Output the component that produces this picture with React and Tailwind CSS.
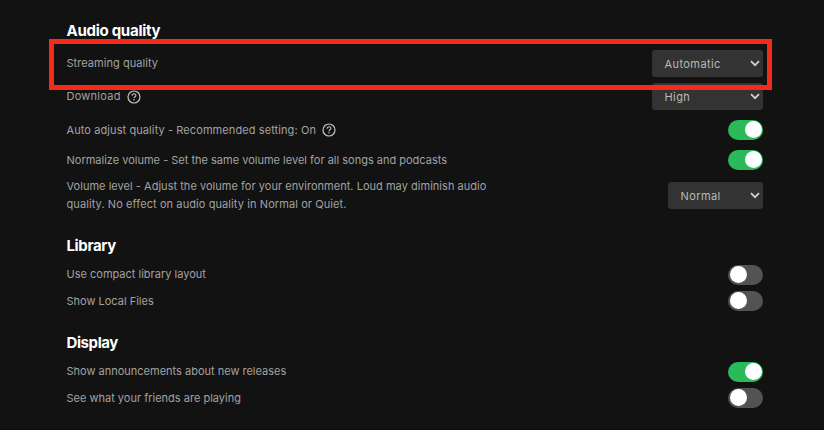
import React, { useState } from "react";

function HelpIcon() {
  return (
    <svg viewBox="0 0 14 14" fill="none" className="h-3.5 w-3.5 shrink-0 text-[#c4c4c4]">
      <circle cx="7" cy="7" r="6" stroke="currentColor" strokeWidth="1.2" />
      <path d="M5.1 5.7C5.1 4.5 5.9 3.8 7 3.8s1.9.7 1.9 1.7c0 1.3-1.9 1.3-1.9 2.7" stroke="currentColor" strokeWidth="1.1" />
      <circle cx="7" cy="9.8" r=".75" fill="currentColor" />
    </svg>
  );
}

function Select({ value, className }) {
  return (
    <button type="button" className={`flex h-[27px] items-center justify-between rounded-[3px] bg-[#333333] pl-[12.5px] pr-[3px] text-[#bababa] ${className}`}>
      <span>{value}</span>
      <svg viewBox="0 0 10 7" fill="none" className="h-[7px] w-2.5">
        <path d="M1 1.2l4 4 4-4" stroke="#d0d0d0" strokeWidth="1.8" />
      </svg>
    </button>
  );
}

function Toggle({ defaultOn = false, label }) {
  const [on, setOn] = useState(defaultOn);

  return (
    <button
      type="button"
      role="switch"
      aria-checked={on}
      aria-label={label}
      onClick={() => setOn(!on)}
      className={`flex h-5 w-[35px] items-center rounded-full ${on ? "justify-end bg-[#2aba5a] pr-px" : "justify-start bg-[#535353] pl-[1.5px]"}`}
    >
      <span className="mb-px h-[17px] w-[17px] rounded-full bg-white" />
    </button>
  );
}

function Row({ children, className }) {
  return <div className={`flex items-center justify-between ${className}`}>{children}</div>;
}

function Heading({ children, className }) {
  return <h2 className={`h-5 text-[15px] leading-5 font-bold text-white ${className}`}>{children}</h2>;
}

export default function App() {
  return (
    <div className="relative h-[430px] w-[824px] overflow-hidden border-b border-[#0b0b0b] bg-[#121212] pt-[21px] pr-[61px] pl-[66.5px] font-['Inter',sans-serif] text-[11px] leading-[18px] text-[#a2a2a2]">
      <section>
        <Heading className="tracking-[-0.27px]">Audio quality</Heading>
        <Row className="mt-[9px] h-[27px]">
          <span className="pb-0.5 tracking-[0.05px]">Streaming quality</span>
          <Select value="Automatic" className="w-[111px] tracking-[0.42px]" />
        </Row>
        <Row className="mt-1.5 h-[27px]">
          <span className="flex items-center gap-1.5">
            <span className="pb-0.5 tracking-[0.25px]">Download</span>
            <HelpIcon />
          </span>
          <Select value="High" className="w-[111px] tracking-[0.4px]" />
        </Row>
        <Row className="mt-2.5 h-5">
          <span className="flex items-center gap-1.5">
            <span className="tracking-[0.09px]">Auto adjust quality - Recommended setting: On</span>
            <HelpIcon />
          </span>
          <Toggle label="Auto adjust quality" defaultOn />
        </Row>
        <Row className="mt-2.5 h-5">
          <span>Normalize volume - Set the same volume level for all songs and podcasts</span>
          <Toggle label="Normalize volume" defaultOn />
        </Row>
        <Row className="mt-3 h-[27px]">
          <span className="pb-0.5">
            <span className="tracking-[0.03px]">Volume level - Adjust the volume for your environment. Loud may diminish audio</span>
            <br />
            <span className="tracking-[0.09px]">quality. No effect on audio quality in Normal or Quiet.</span>
          </span>
          <Select value="Normal" className="w-[95px] tracking-[0.4px]" />
        </Row>
      </section>

      <section className="mt-[27px]">
        <Heading className="tracking-[-0.36px]">Library</Heading>
        <Row className="mt-[9px] h-5">
          <span className="pb-0.5">Use compact library layout</span>
          <Toggle label="Use compact library layout" />
        </Row>
        <Row className="mt-1.5 h-5">
          <span>Show Local Files</span>
          <Toggle label="Show Local Files" />
        </Row>
      </section>

      <section className="mt-[22px]">
        <Heading className="tracking-[-0.4px]">Display</Heading>
        <Row className="mt-[9px] h-5">
          <span className="pb-0.5">Show announcements about new releases</span>
          <Toggle label="Show announcements about new releases" defaultOn />
        </Row>
        <Row className="mt-1.5 h-5">
          <span>See what your friends are playing</span>
          <Toggle label="See what your friends are playing" />
        </Row>
      </section>

      {/* callout around the streaming quality row */}
      <div className="pointer-events-none absolute top-[39px] left-[49px] h-[51px] w-[723px] border-[5px] border-[#f42a1a]" />
    </div>
  );
}
